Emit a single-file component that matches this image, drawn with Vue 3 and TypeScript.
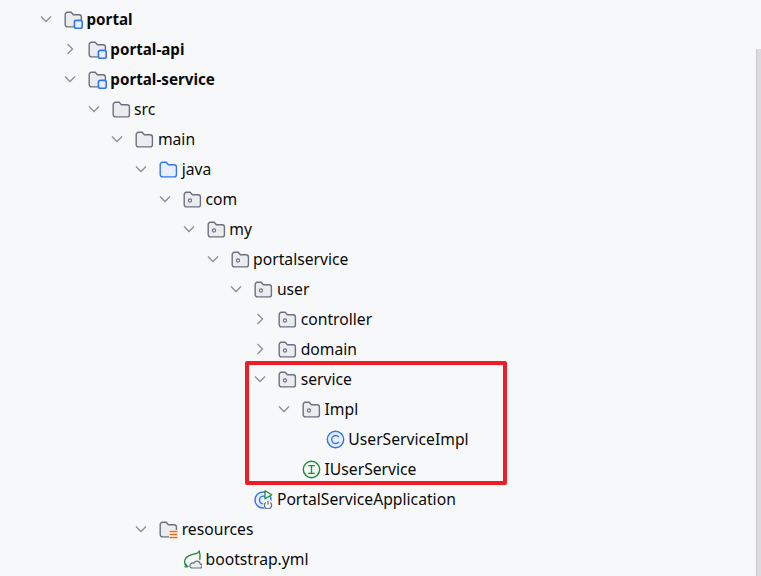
<script setup lang="ts">
type Icon = 'module' | 'folder' | 'source' | 'package' | 'cls' | 'iface' | 'app' | 'res' | 'yml'

interface Row {
  name: string
  depth: number
  icon: Icon
  open?: boolean
  bold?: boolean
}

const INDENT = 23.8

const rows: Row[] = [
  { name: 'portal', depth: 0, icon: 'module', open: true, bold: true },
  { name: 'portal-api', depth: 1, icon: 'module', open: false, bold: true },
  { name: 'portal-service', depth: 1, icon: 'module', open: true, bold: true },
  { name: 'src', depth: 2, icon: 'folder', open: true },
  { name: 'main', depth: 3, icon: 'folder', open: true },
  { name: 'java', depth: 4, icon: 'source', open: true },
  { name: 'com', depth: 5, icon: 'package', open: true },
  { name: 'my', depth: 6, icon: 'package', open: true },
  { name: 'portalservice', depth: 7, icon: 'package', open: true },
  { name: 'user', depth: 8, icon: 'package', open: true },
  { name: 'controller', depth: 9, icon: 'package', open: false },
  { name: 'domain', depth: 9, icon: 'package', open: false },
  { name: 'service', depth: 9, icon: 'package', open: true },
  { name: 'Impl', depth: 10, icon: 'package', open: true },
  { name: 'UserServiceImpl', depth: 11, icon: 'cls' },
  { name: 'IUserService', depth: 10, icon: 'iface' },
  { name: 'PortalServiceApplication', depth: 8, icon: 'app' },
  { name: 'resources', depth: 4, icon: 'res', open: true },
  { name: 'bootstrap.yml', depth: 5, icon: 'yml' },
]

const FOLDER = 'M1.2 4.500a2.200 2.200 0 0 1 2.200-2.200h3.800l2.200 2.400h5.800a2.200 2.200 0 0 1 2.200 2.200v7.800a2.200 2.200 0 0 1-2.200 2.200H3.400a2.200 2.200 0 0 1-2.200-2.200z'
</script>

<template>
  <div class="tree">
    <div
      v-for="row in rows"
      :key="row.name"
      class="row"
      :class="{ bold: row.bold }"
      :style="{ paddingLeft: row.depth * INDENT + 'px' }"
    >
      <span class="arrow">
        <svg v-if="row.open !== undefined" width="12" height="12" viewBox="0 0 12 12" fill="none" stroke="#8b8e98" stroke-width="1.3">
          <path v-if="row.open" d="M1 3.500l5 5 5-5" />
          <path v-else d="M3.500 1l5 5-5 5" />
        </svg>
      </span>
      <svg class="icon" width="19" height="19" viewBox="0 0 19 19" fill="none">
        <template v-if="row.icon === 'module'">
          <path :d="FOLDER" fill="#ebecf0" stroke="#6c707e" stroke-width="1.400" />
          <rect x="10.400" y="10.400" width="7.800" height="7.800" rx="1.800" fill="#e7effd" stroke="#3574f0" stroke-width="1.600" />
        </template>
        <path v-else-if="row.icon === 'folder'" :d="FOLDER" fill="#ebecf0" stroke="#6c707e" stroke-width="1.400" />
        <path v-else-if="row.icon === 'source'" :d="FOLDER" fill="#e7effd" stroke="#3574f0" stroke-width="1.400" />
        <template v-else-if="row.icon === 'package'">
          <path :d="FOLDER" fill="#ebecf0" stroke="#6c707e" stroke-width="1.400" />
          <circle cx="7" cy="10.500" r="1.600" stroke="#6c707e" stroke-width="1.100" />
        </template>
        <template v-else-if="row.icon === 'cls'">
          <circle cx="9.500" cy="9.500" r="8.200" fill="#e7effd" stroke="#3574f0" stroke-width="1.400" />
          <path d="M12.800 7a4 4 0 1 0 0 5" stroke="#3574f0" stroke-width="1.300" />
        </template>
        <template v-else-if="row.icon === 'iface'">
          <circle cx="9.500" cy="9.500" r="8.200" fill="#f2fcf3" stroke="#208a3c" stroke-width="1.400" />
          <path d="M6.200 5.600h6.600M6.200 13.400h6.600M9.500 5.600v7.800" stroke="#208a3c" stroke-width="1.300" />
        </template>
        <template v-else-if="row.icon === 'app'">
          <circle cx="9" cy="10" r="8" fill="#e7effd" stroke="#3574f0" stroke-width="1.400" />
          <path d="M12 7.400a3.800 3.800 0 1 0 0 5.200" stroke="#3574f0" stroke-width="1.300" />
          <path d="M11 .8v8l6.800-4z" fill="#f2fcf3" stroke="#208a3c" stroke-width="1.300" stroke-linejoin="round" />
          <circle cx="14" cy="14.500" r="5" fill="#f7f8fa" />
          <path d="M11.700 12.500a3.600 3.600 0 1 0 4.600 0" stroke="#6c707e" stroke-width="1.300" />
          <path d="M14 10.800v3.600" stroke="#6c707e" stroke-width="1.300" />
        </template>
        <template v-else-if="row.icon === 'res'">
          <path :d="FOLDER" fill="#ebecf0" stroke="#6c707e" stroke-width="1.400" />
          <rect x="10" y="10" width="9" height="9" fill="#f7f8fa" />
          <path d="M10.500 11.500h8M10.500 14.500h8M10.500 17.500h8" stroke="#e66d17" stroke-width="1.700" />
        </template>
        <template v-else-if="row.icon === 'yml'">
          <path d="M16.200 1.200c-1 2.400-4.200 2.600-7.200 3.400C5 5.700 1.500 8.500 1.500 12c0 2 1 3.500 2.500 4.600" stroke="#208a3c" stroke-width="1.300" stroke-linecap="round" />
          <path d="M16.200 1.200c1 2.600 1.300 5.300.6 8.300M1.800 16.800l3.200-.3M2.600 13.800l1.600 2.800" stroke="#208a3c" stroke-width="1.300" stroke-linecap="round" />
          <path d="M8.500 18h8.300a2.100 2.100 0 0 0 .4-4.200 3.400 3.400 0 0 0-6.500-.6 2.500 2.500 0 0 0-2.200 4.800z" fill="#ebecf0" stroke="#6c707e" stroke-width="1.200" />
        </template>
      </svg>
      <span class="name">{{ row.name }}</span>
    </div>
    <div class="highlight"></div>
    <div class="scrollbar"></div>
  </div>
</template>

<style scoped>
.tree {
  position: relative;
  box-sizing: border-box;
  width: 761px;
  height: 576px;
  overflow: hidden;
  padding: 4px 0 0 40px;
  background: #f7f8fa;
  font-family: "Noto Sans", "Open Sans", sans-serif;
  font-size: 15.7px;
  color: #0a0a0a;
}

.row {
  display: flex;
  align-items: center;
  height: 30px;
  white-space: nowrap;
}

.arrow {
  display: flex;
  flex: none;
  width: 24px;
  height: 12px;
}

.icon {
  flex: none;
  margin-right: 3.5px;
}

.name {
  margin-top: -1px;
}

.bold .name {
  font-size: 15.2px;
  font-weight: 700;
}

.highlight {
  position: absolute;
  left: 245px;
  top: 361px;
  width: 262px;
  height: 124px;
  box-sizing: border-box;
  border: 4px solid #ee1c25;
  border-radius: 2px;
}

.scrollbar {
  position: absolute;
  left: 756px;
  top: 49px;
  width: 5px;
  bottom: 0;
  background: #dcdcde;
  border-left: 1px solid #c9c9cb;
  box-sizing: border-box;
}
</style>
